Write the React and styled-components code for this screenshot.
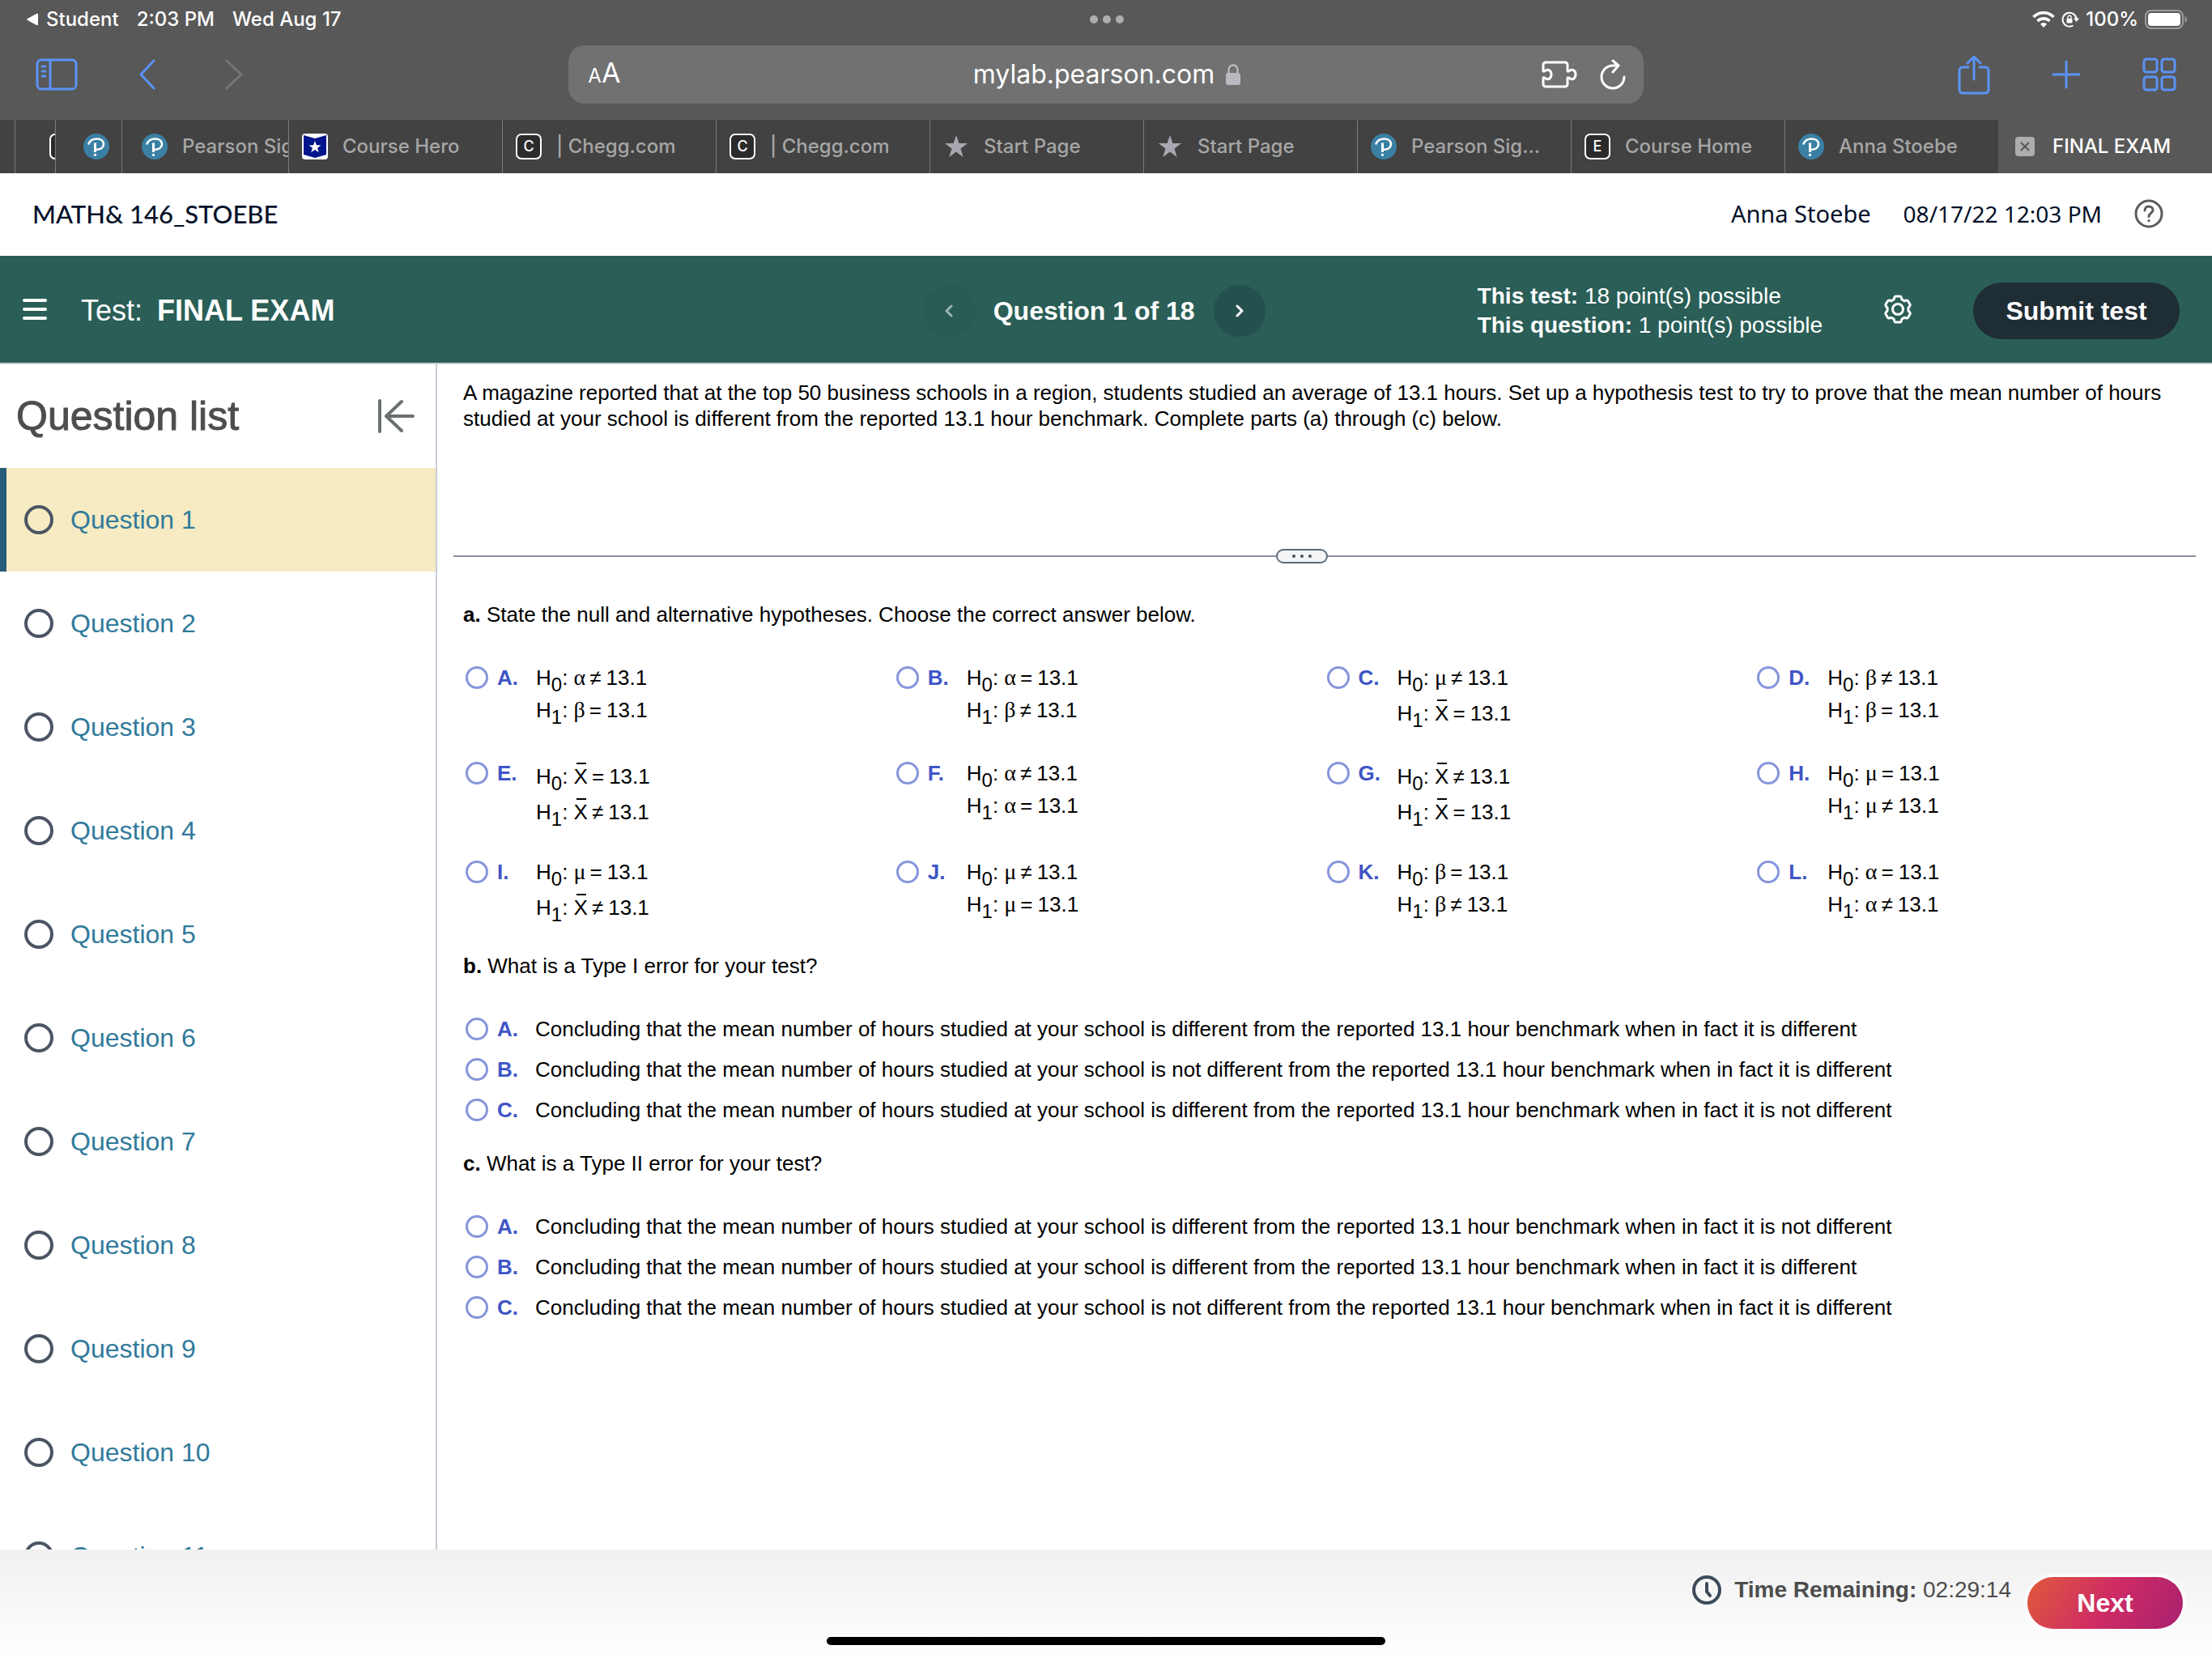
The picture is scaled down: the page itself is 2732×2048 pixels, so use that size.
import React, { useState } from 'react'
import styled, { createGlobalStyle } from 'styled-components'

const theme = {
  chrome: '#585858',
  tab: '#424242',
  tabText: '#a6a6a6',
  blue: '#5a93f6',
  green: '#2a5e57',
  greenDark: '#24504d',
  ink: '#05112a',
  link: '#317a9b',
  grey: '#4d4d4d',
  line: '#c7cdd6',
  choice: '#3f55c6',
  ui: '"Inter", "Liberation Sans", sans-serif',
  text: '"Liberation Sans", Arial, sans-serif',
}

const GlobalStyle = createGlobalStyle`
  *,
  *::before,
  *::after {
    box-sizing: border-box;
  }

  body {
    margin: 0;
    background: #fff;
    font-family: ${theme.text};
  }

  button, input {
    font: inherit;
    color: inherit;
    border: 0;
    padding: 0;
    margin: 0;
    background: none;
  }

  a {
    color: inherit;
    text-decoration: none;
  }

  svg {
    display: block;
    flex: none;
  }
`

const Screen = styled.div`
  display: flex;
  flex-direction: column;
  height: 100vh;
  overflow: hidden;
`

/* Browser chrome */

const StatusBar = styled.div`
  display: grid;
  grid-template-columns: 1fr auto 1fr;
  align-items: center;
  height: 48px;
  padding: 0 30px 0 32px;
  background: ${theme.chrome};
  color: #fff;
  font: 500 24px/48px ${theme.ui};
`

const StatusGroup = styled.div`
  display: flex;
  align-items: center;
  justify-content: ${({ $end }) => ($end ? 'flex-end' : 'flex-start')};
  gap: ${({ $end }) => ($end ? '8px' : '22px')};
`

const BackToApp = styled.a`
  display: flex;
  align-items: center;
  gap: 9px;
`

const Dots = styled.div`
  display: flex;
  gap: ${({ $gap }) => $gap}px;

  i {
    width: ${({ $size }) => $size}px;
    height: ${({ $size }) => $size}px;
    border-radius: 50%;
    background: ${({ $color }) => $color};
  }
`

const Toolbar = styled.div`
  display: grid;
  grid-template-columns: 1fr 1.89fr 1fr;
  align-items: center;
  height: 100px;
  padding-bottom: 12px;
  background: ${theme.chrome};
  color: ${theme.blue};
`

const ToolGroup = styled.div`
  display: flex;
  align-items: center;
  justify-content: ${({ $end }) => ($end ? 'flex-end' : 'flex-start')};
  gap: 76px;
  padding: 0 44px;
`

const IconButton = styled.button`
  display: flex;
  color: ${({ $color }) => $color || 'inherit'};
`

const AddressBar = styled.div`
  display: grid;
  grid-template-columns: 1fr auto 1fr;
  align-items: center;
  height: 72px;
  padding: 0 22px 0 24px;
  border-radius: 20px;
  background: #717171;
  color: #fff;
  font-family: ${theme.ui};
`

const TextSize = styled.button`
  justify-self: start;
  font-size: 34px;
  line-height: 44px;

  small {
    font-size: 24px;
  }
`

const Address = styled.label`
  display: flex;
  align-items: center;
  gap: 14px;
`

const AddressInput = styled.input`
  field-sizing: content;
  font-size: 32px;
  line-height: 40px;
  outline: 0;
`

const AddressTools = styled.div`
  display: flex;
  justify-content: flex-end;
  align-items: center;
  gap: 28px;
`

const TabStrip = styled.nav`
  display: flex;
  height: 66px;
  padding-left: 18px;
  background: ${theme.tab};
  font: 500 24px/66px ${theme.ui};
  color: ${theme.tabText};
`

const Tab = styled.a`
  display: flex;
  align-items: center;
  gap: 18px;
  flex: ${({ $width }) => ($width ? `0 0 ${$width}px` : '1 1 0')};
  min-width: 0;
  padding-left: ${({ $pad }) => $pad || 16}px;
  overflow: hidden;
  white-space: nowrap;
  border-left: 1px solid ${({ $active }) => ($active ? theme.chrome : '#7a7a7a')};
  background: ${({ $active }) => ($active ? theme.chrome : 'transparent')};
  color: ${({ $active }) => ($active ? '#fff' : 'inherit')};
`

const TabIcon = styled.span`
  display: grid;
  place-items: center;
  flex: none;
  width: 32px;
  height: 32px;
`

const LetterBadge = styled.span`
  flex: none;
  width: 32px;
  height: 32px;
  border: 2px solid #fff;
  border-radius: 7px;
  background: #2b2b2b;
  color: #fff;
  font-size: 18px;
  line-height: 28px;
  text-align: center;
`

/* Page headers */

const CourseHeader = styled.header`
  display: flex;
  align-items: center;
  height: 102px;
  padding: 0 60px 2px 40px;
  color: ${theme.ink};
  font: 400 29px/40px "Noto Sans", sans-serif;
`

const CourseName = styled.h1`
  flex: 1;
  margin: 0;
  font: 500 31px/40px "Lato", sans-serif;
`

const HeaderDate = styled.time`
  margin: 0 40px;
  font-size: 28px;
`

const TestHeader = styled.header`
  display: flex;
  align-items: center;
  height: 134px;
  padding: 4px 40px 0 28px;
  border-bottom: 2px solid ${theme.line};
  background: ${theme.green};
  color: #fff;

  > ${IconButton} {
    padding-bottom: 4px;
  }
`

const TestTitle = styled.h2`
  flex: 1;
  margin: 0 0 0 42px;
  font-size: 36px;
  font-weight: 400;
  line-height: 40px;

  b {
    margin-left: 8px;
  }
`

const QuestionNav = styled.div`
  display: flex;
  align-items: center;
  gap: 23px;
  font-size: 32px;
  font-weight: 700;
`

const NavButton = styled.button`
  display: grid;
  place-items: center;
  width: 64px;
  height: 64px;
  border-radius: 50%;
  background: ${theme.greenDark};

  &:disabled {
    background: #295a54;
    color: #9bb5b1;
  }
`

const Points = styled.p`
  margin: 0 75px 0 262px;
  font-size: 28px;
  line-height: 36px;
`

const PillButton = styled.button`
  width: ${({ $width }) => $width}px;
  height: ${({ $height }) => $height}px;
  border-radius: 36px;
  background: ${({ $fill }) => $fill};
  color: #fff;
  font-size: 32px;
  font-weight: 700;
`

const SubmitButton = styled(PillButton)`
  margin-left: 75px;
`

/* Body */

const Body = styled.div`
  display: flex;
  flex: 1;
  min-height: 0;
`

const Sidebar = styled.aside`
  flex: none;
  width: 540px;
  overflow: hidden;
  border-right: 2px solid ${theme.line};
`

const SidebarHead = styled.div`
  display: flex;
  align-items: center;
  justify-content: space-between;
  height: 128px;
  padding: 0 26px 0 20px;
  color: ${theme.grey};

  h3 {
    margin: 0;
    font-size: 50px;
    font-weight: 400;
    -webkit-text-stroke: 1px ${theme.grey};
  }
`

const QuestionLink = styled.a`
  display: flex;
  align-items: center;
  gap: 21px;
  height: 128px;
  padding-left: 22px;
  border-left: 8px solid ${({ $current }) => ($current ? '#265c7a' : 'transparent')};
  background: ${({ $current }) => ($current ? '#f6ebc3' : 'none')};
  color: ${theme.link};
  font-size: 32px;

  &::before {
    content: '';
    width: 36px;
    height: 36px;
    border: 4px solid #4b5563;
    border-radius: 50%;
  }
`

const Main = styled.main`
  flex: 1;
  min-width: 0;
  padding: 19px 20px 0;
  overflow: hidden;
  font-size: 26px;
  line-height: 32px;
  color: #000;
`

const Intro = styled.p`
  min-height: 209px;
  margin: 0;
  padding: 0 12px;
`

/* The handle sits slightly left of the middle of the line */
const Divider = styled.div`
  display: flex;
  align-items: center;

  &::before,
  &::after {
    content: '';
    flex: 18;
    height: 2px;
    background: #8a91a1;
  }

  &::after {
    flex: 19;
  }
`

const DividerHandle = styled.button`
  display: grid;
  place-items: center;
  width: 64px;
  height: 18px;
  border: 2px solid #5f6b7c;
  border-radius: 9px;
  background: #f2f4f6;
`

const Part = styled.fieldset`
  min-width: 0;
  margin: ${({ $top }) => $top}px 0 0;
  padding: 0 10px 0 12px;
  border: 0;

  legend {
    padding: 0;
  }
`

const HypothesisGrid = styled.div`
  display: grid;
  grid-template-columns: repeat(4, 1fr);
  row-gap: 34px;
  padding: 42px 0 0 3px;
`

const ChoiceList = styled.div`
  padding: 37px 0 0 3px;
`

const Choice = styled.label`
  display: grid;
  grid-template-columns: 28px 36px 1fr;
  column-gap: 11px;
  align-items: start;
  line-height: ${({ $line }) => $line}px;

  > b {
    color: ${theme.choice};
  }
`

const Radio = styled.input`
  appearance: none;
  width: 28px;
  height: 28px;
  margin-top: ${({ $line }) => ($line - 28) / 2}px;
  border: 3px solid #8795dc;
  border-radius: 50%;

  &:checked {
    background: radial-gradient(${theme.choice} 45%, transparent 50%);
  }
`

const Equation = styled.span`
  display: block;
  padding: ${({ $tall }) => ($tall ? 4 : 0)}px 0 0 1px;

  sub {
    position: relative;
    top: 8px;
    font-size: 24px;
    line-height: 0;
    vertical-align: baseline;
  }
`

const Greek = styled.span`
  font-family: "Liberation Serif", serif;
  font-size: 28px;
  line-height: 1;
`

const XBar = styled.span`
  position: relative;

  &::before {
    content: '';
    position: absolute;
    top: -2px;
    left: 3px;
    right: 2px;
    height: 2px;
    background: #000;
  }
`

const Operator = styled.span`
  margin: 0 6px 0 5px;
`

/* Footer */

const Footer = styled.footer`
  position: relative;
  display: flex;
  align-items: flex-start;
  justify-content: flex-end;
  gap: 20px;
  height: 134px;
  padding: 30px 36px 0 0;
  background: linear-gradient(#f0f0f0, #fff);
`

const Timer = styled.div`
  display: flex;
  align-items: center;
  gap: 16px;
  height: 40px;
  color: ${theme.grey};
  font-size: 28px;

  svg {
    color: #3d4a5a;
  }
`

const NextButton = styled(PillButton)`
  margin-top: 4px;
  box-shadow: 0 0 0 4px rgba(255, 255, 255, 0.6);
`

const HomeIndicator = styled.div`
  position: absolute;
  bottom: 16px;
  left: calc(50% - 345px);
  width: 690px;
  height: 10px;
  border-radius: 5px;
  background: #000;
`

/* Icons */

const Stroke = ({ w, h, width = 2, children }) => (
  <svg
    width={w}
    height={h}
    viewBox={`0 0 ${w} ${h}`}
    fill="none"
    stroke="currentColor"
    strokeWidth={width}
    strokeLinecap="round"
    strokeLinejoin="round"
    aria-hidden="true"
  >
    {children}
  </svg>
)

const PearsonLogo = () => (
  <svg width="32" height="32" viewBox="0 0 32 32" fill="none" stroke="#fff" aria-hidden="true">
    <circle cx="16" cy="16" r="16" fill="#3a80a4" stroke="none" />
    <path d="M6.500 12.500C8 9 12 6.500 16.500 6.500c5 0 8.500 2.500 8.500 6.500s-3.500 6.500-8 6.800" strokeWidth="2.600" strokeLinecap="round" />
    <path d="M14.500 11.500V23" strokeWidth="3" />
    <circle cx="14.500" cy="26.300" r="1.600" fill="#fff" stroke="none" />
  </svg>
)

const CourseHeroLogo = () => (
  <svg width="32" height="32" viewBox="0 0 32 32" aria-hidden="true">
    <rect width="32" height="32" rx="4" fill="#fff" />
    <path d="M2 2l14 4 14-4v24l-14 4-14-4z" fill="#00148c" />
    <path d="M16 9l1.900 5.200 5.600.2-4.400 3.400 1.600 5.400L16 20l-4.700 3.200 1.600-5.400-4.400-3.400 5.600-.2z" fill="#fff" />
  </svg>
)

const StarIcon = () => (
  <svg width="28" height="28" viewBox="0 0 28 28" fill="#a9a8b0" aria-hidden="true">
    <path d="M14 0l3.400 10H28l-8.500 6.400L22.700 27 14 20.600 5.300 27l3.200-10.600L0 10h10.600z" />
  </svg>
)

const CloseIcon = () => (
  <svg width="24" height="24" viewBox="0 0 24 24" aria-hidden="true">
    <rect width="24" height="24" rx="4" fill="#adadad" />
    <path d="M7.500 7.500l9 9m0-9l-9 9" stroke="#585858" strokeWidth="2" strokeLinecap="round" />
  </svg>
)

const WifiIcon = () => (
  <svg width="28" height="20" viewBox="0 0 28 20" fill="none" stroke="#fff" strokeWidth="3.600" aria-hidden="true">
    <path d="M1.500 7a17.500 17.500 0 0 1 25 0" />
    <path d="M6.500 12a10.500 10.500 0 0 1 15 0" />
    <path d="M14 20l-4-4.300a5.800 5.800 0 0 1 8 0z" fill="#fff" stroke="none" />
  </svg>
)

const RotationLockIcon = () => (
  <svg width="22" height="20" viewBox="0 0 22 20" fill="none" stroke="#fff" strokeWidth="2" aria-hidden="true">
    <path d="M14.500 17.500A8.500 8.500 0 1 1 18.500 9" />
    <path d="M15 8.500h7l-3.500 4.500z" fill="#fff" stroke="none" />
    <rect x="6.500" y="9" width="7" height="5.500" rx="1" fill="#fff" stroke="none" />
    <path d="M8 9.500V7.300a2 2 0 0 1 4 0v2.200" strokeWidth="1.400" />
  </svg>
)

const BatteryIcon = () => (
  <svg width="53" height="24" viewBox="0 0 53 24" aria-hidden="true">
    <rect x="1" y="1" width="46" height="22" rx="7" fill="none" stroke="#9d9d9d" strokeWidth="2" />
    <rect x="4" y="4" width="40" height="16" rx="4" fill="#fff" />
    <path d="M49.500 8c3 1 3 7 0 8z" fill="#9d9d9d" />
  </svg>
)

const LockIcon = () => (
  <svg width="18" height="26" viewBox="0 0 18 26" aria-hidden="true">
    <rect y="11" width="18" height="15" rx="3" fill="#bab9c0" />
    <path d="M3.500 12V7a5.500 5.500 0 0 1 11 0v5" fill="none" stroke="#bab9c0" strokeWidth="2.400" />
  </svg>
)

const tabs = [
  { id: 'pearson-small', width: 82, pad: 34, icon: <PearsonLogo /> },
  { id: 'pearson-cut', width: 206, pad: 24, icon: <PearsonLogo />, title: 'Pearson Sig...' },
  { id: 'hero', icon: <CourseHeroLogo />, title: 'Course Hero' },
  { id: 'chegg-1', icon: <LetterBadge>C</LetterBadge>, title: '| Chegg.com' },
  { id: 'chegg-2', icon: <LetterBadge>C</LetterBadge>, title: '| Chegg.com' },
  { id: 'start-1', icon: <StarIcon />, title: 'Start Page' },
  { id: 'start-2', icon: <StarIcon />, title: 'Start Page' },
  { id: 'pearson', icon: <PearsonLogo />, title: 'Pearson Sig...' },
  { id: 'home', icon: <LetterBadge>E</LetterBadge>, title: 'Course Home' },
  { id: 'anna', icon: <PearsonLogo />, title: 'Anna Stoebe' },
  { id: 'exam', icon: <CloseIcon />, title: 'FINAL EXAM', active: true },
]

const hypotheses = [
  ['A', 'α≠', 'β='],
  ['B', 'α=', 'β≠'],
  ['C', 'μ≠', 'X='],
  ['D', 'β≠', 'β='],
  ['E', 'X=', 'X≠'],
  ['F', 'α≠', 'α='],
  ['G', 'X≠', 'X='],
  ['H', 'μ=', 'μ≠'],
  ['I', 'μ=', 'X≠'],
  ['J', 'μ≠', 'μ='],
  ['K', 'β=', 'β≠'],
  ['L', 'α=', 'α≠'],
]

const conclusion = (school, fact) =>
  `Concluding that the mean number of hours studied at your school is ${school} from the reported 13.1 hour benchmark when in fact it is ${fact}`

const typeOne = [
  conclusion('different', 'different'),
  conclusion('not different', 'different'),
  conclusion('different', 'not different'),
]

const typeTwo = [
  conclusion('different', 'not different'),
  conclusion('different', 'different'),
  conclusion('not different', 'different'),
]

const Hypothesis = ({ index, value: [symbol, operator] }) => (
  <Equation $tall={symbol === 'X'}>
    H<sub>{index}</sub>: {symbol === 'X' ? <XBar>X</XBar> : <Greek>{symbol}</Greek>}
    <Operator>{operator}</Operator>13.1
  </Equation>
)

const ChoiceGroup = ({ name, options }) => {
  const [picked, setPicked] = useState(null)
  return (
    <ChoiceList>
      {options.map((text, i) => {
        const letter = 'ABC'[i]
        return (
          <Choice key={letter} $line={50}>
            <Radio type="radio" name={name} $line={50} checked={picked === letter} onChange={() => setPicked(letter)} />
            <b>{letter}.</b>
            <span>{text}</span>
          </Choice>
        )
      })}
    </ChoiceList>
  )
}

const Browser = () => (
  <>
    <StatusBar>
      <StatusGroup>
        <BackToApp href="#student">
          <svg width="16" height="16" viewBox="0 0 16 16" fill="#fff" aria-hidden="true">
            <path d="M15 2v12c0 1-1 1.500-2 1L2 9c-1-.6-1-1.400 0-2l11-6c1-.5 2 0 2 1z" />
          </svg>
          Student
        </BackToApp>
        <span>2:03 PM</span>
        <span>Wed Aug 17</span>
      </StatusGroup>
      <Dots $size={10} $gap={6} $color="#aeaeae"><i /><i /><i /></Dots>
      <StatusGroup $end>
        <WifiIcon />
        <RotationLockIcon />
        <span>100%</span>
        <BatteryIcon />
      </StatusGroup>
    </StatusBar>
    <Toolbar>
      <ToolGroup>
        <IconButton aria-label="Sidebar">
          <Stroke w={52} h={40} width={3}>
            <rect x="2" y="2" width="48" height="36" rx="5" />
            <path d="M18 2v36M8 10h4M8 16h4M8 22h4" />
          </Stroke>
        </IconButton>
        <IconButton aria-label="Back">
          <Stroke w={24} h={38} width={3}><path d="M18 2L2 19l16 17" /></Stroke>
        </IconButton>
        <IconButton aria-label="Forward" $color="#767676">
          <Stroke w={32} h={38} width={3}><path d="M8 2l18 17L8 36" /></Stroke>
        </IconButton>
      </ToolGroup>
      <AddressBar>
        <TextSize aria-label="Page settings"><small>A</small>A</TextSize>
        <Address>
          <AddressInput aria-label="Address" defaultValue="mylab.pearson.com" />
          <LockIcon />
        </Address>
        <AddressTools>
          <IconButton aria-label="Extensions">
            <Stroke w={44} h={34} width={3}>
              <path d="M5 2h24a3 3 0 0 1 3 3v7c0 2 2 1 3 0 3-2 7 0 7 5s-4 7-7 5c-1-1-3-2-3 0v7a3 3 0 0 1-3 3H5a3 3 0 0 1-3-3v-7c0-2 2-1 3 0 3 2 7 0 7-5s-4-7-7-5c-1 1-3 2-3 0V5a3 3 0 0 1 3-3z" />
            </Stroke>
          </IconButton>
          <IconButton aria-label="Reload">
            <Stroke w={32} h={38} width={3}>
              <path d="M30 22A14 14 0 1 1 16 8h6" />
              <path d="M16 2l7 6-7 8" />
            </Stroke>
          </IconButton>
        </AddressTools>
      </AddressBar>
      <ToolGroup $end>
        <IconButton aria-label="Share">
          <Stroke w={40} h={50} width={3}>
            <path d="M13 16H6a4 4 0 0 0-4 4v24a4 4 0 0 0 4 4h28a4 4 0 0 0 4-4V20a4 4 0 0 0-4-4h-7" />
            <path d="M20 31V3M12 11l8-8 8 8" />
          </Stroke>
        </IconButton>
        <IconButton aria-label="New tab">
          <Stroke w={36} h={36} width={3}><path d="M18 2v32M2 18h32" /></Stroke>
        </IconButton>
        <IconButton aria-label="Tabs">
          <Stroke w={42} h={42} width={3}>
            <rect x="2" y="2" width="16" height="16" rx="3" />
            <rect x="24" y="2" width="16" height="16" rx="3" />
            <rect x="2" y="24" width="16" height="16" rx="3" />
            <rect x="24" y="24" width="16" height="16" rx="3" />
          </Stroke>
        </IconButton>
      </ToolGroup>
    </Toolbar>
    <TabStrip>
      <Tab href="#tab" $width={50} $pad={42} aria-label="Chegg"><LetterBadge /></Tab>
      {tabs.map(({ id, width, pad, icon, title, active }) => (
        <Tab key={id} href={`#${id}`} $width={width} $pad={pad} $active={active}>
          <TabIcon>{icon}</TabIcon>
          {title}
        </Tab>
      ))}
    </TabStrip>
  </>
)

function App () {
  const [picked, setPicked] = useState(null)

  return (
    <Screen>
      <GlobalStyle />
      <Browser />
      <CourseHeader>
        <CourseName>MATH&amp; 146_STOEBE</CourseName>
        <span>Anna Stoebe</span>
        <HeaderDate>08/17/22 12:03 PM</HeaderDate>
        <IconButton aria-label="Help" $color="#5b5b5b">
          <Stroke w={36} h={36} width={3}>
            <circle cx="18" cy="18" r="16" />
            <path d="M13 14c0-7 10-6 10-.5 0 3.500-5 4-5 8" />
            <path d="M18 26.500v.2" />
          </Stroke>
        </IconButton>
      </CourseHeader>
      <TestHeader>
        <IconButton aria-label="Menu">
          <Stroke w={30} h={28} width={4}><path d="M2 3h26M2 14h26M2 25h26" /></Stroke>
        </IconButton>
        <TestTitle>Test: <b>FINAL EXAM</b></TestTitle>
        <QuestionNav>
          <NavButton disabled aria-label="Previous question">
            <Stroke w={12} h={16} width={3}><path d="M9 2L3 8l6 6" /></Stroke>
          </NavButton>
          <span>Question 1 of 18</span>
          <NavButton aria-label="Next question">
            <Stroke w={12} h={16} width={3}><path d="M3 2l6 6-6 6" /></Stroke>
          </NavButton>
        </QuestionNav>
        <Points>
          <b>This test:</b> 18 point(s) possible<br />
          <b>This question:</b> 1 point(s) possible
        </Points>
        <IconButton aria-label="Settings">
          <Stroke w={36} h={36} width={3}>
            <path d="M15.300 2h5.400q1.300 0 1.600 1.500l.6 2.400q1.600.8 3.100 1.900l2.300-.8q1.500-.4 2.200.8l2.500 4.300q.7 1.200-.4 2.200l-1.700 1.900v3.600l1.700 1.900q1.100 1 .4 2.200l-2.500 4.300q-.7 1.200-2.200.8l-2.300-.8q-1.500 1.100-3.100 1.900l-.6 2.400q-.3 1.500-1.600 1.500h-5.400q-1.300 0-1.600-1.500l-.6-2.400q-1.600-.8-3.100-1.900l-2.300.8q-1.500.4-2.200-.8L3 23.900q-.7-1.200.4-2.200l1.700-1.900v-3.600l-1.700-1.900q-1.100-1-.4-2.200l2.500-4.300q.7-1.200 2.200-.8l2.300.8q1.500-1.100 3.100-1.900l.6-2.400Q14 2 15.300 2z" />
            <circle cx="18" cy="18" r="6.500" />
          </Stroke>
        </IconButton>
        <SubmitButton $width={255} $height={70} $fill="#1f2e35">Submit test</SubmitButton>
      </TestHeader>
      <Body>
        <Sidebar>
          <SidebarHead>
            <h3>Question list</h3>
            <IconButton aria-label="Collapse question list" $color="#6a7070">
              <Stroke w={46} h={42} width={4}>
                <path d="M3 2v38M44 21H11M30 3L11 21l19 18" />
              </Stroke>
            </IconButton>
          </SidebarHead>
          {Array.from({ length: 11 }, (_, i) => (
            <QuestionLink key={i} href={`#question-${i + 1}`} $current={i === 0}>
              Question {i + 1}
            </QuestionLink>
          ))}
        </Sidebar>
        <Main>
          <Intro>
            A magazine reported that at the top 50 business schools in a region, students studied an average of 13.1
            hours. Set up a hypothesis test to try to prove that the mean number of hours studied at your school is
            different from the reported 13.1 hour benchmark. Complete parts (a) through (c) below.
          </Intro>
          <Divider>
            <DividerHandle aria-label="Resize panels">
              <Dots $size={4} $gap={6} $color="#4a4f57"><i /><i /><i /></Dots>
            </DividerHandle>
          </Divider>
          <Part $top={47}>
            <legend><b>a.</b> State the null and alternative hypotheses. Choose the correct answer below.</legend>
            <HypothesisGrid>
              {hypotheses.map(([letter, h0, h1]) => (
                <Choice key={letter} $line={40}>
                  <Radio type="radio" name="hypotheses" $line={40} checked={picked === letter} onChange={() => setPicked(letter)} />
                  <b>{letter}.</b>
                  <span>
                    <Hypothesis index={0} value={h0} />
                    <Hypothesis index={1} value={h1} />
                  </span>
                </Choice>
              ))}
            </HypothesisGrid>
          </Part>
          <Part $top={36}>
            <legend><b>b.</b> What is a Type I error for your test?</legend>
            <ChoiceGroup name="type-one" options={typeOne} />
          </Part>
          <Part $top={25}>
            <legend><b>c.</b> What is a Type II error for your test?</legend>
            <ChoiceGroup name="type-two" options={typeTwo} />
          </Part>
        </Main>
      </Body>
      <Footer>
        <Timer>
          <Stroke w={36} h={36} width={4}>
            <circle cx="18" cy="18" r="16" />
            <path d="M18 10v10l4 5" />
          </Stroke>
          <span><b>Time Remaining:</b> 02:29:14</span>
        </Timer>
        <NextButton $width={192} $height={64} $fill="linear-gradient(120deg, #df5a3a, #cf2c64 50%, #a8206f)">
          Next
        </NextButton>
        <HomeIndicator />
      </Footer>
    </Screen>
  )
}

export default App
